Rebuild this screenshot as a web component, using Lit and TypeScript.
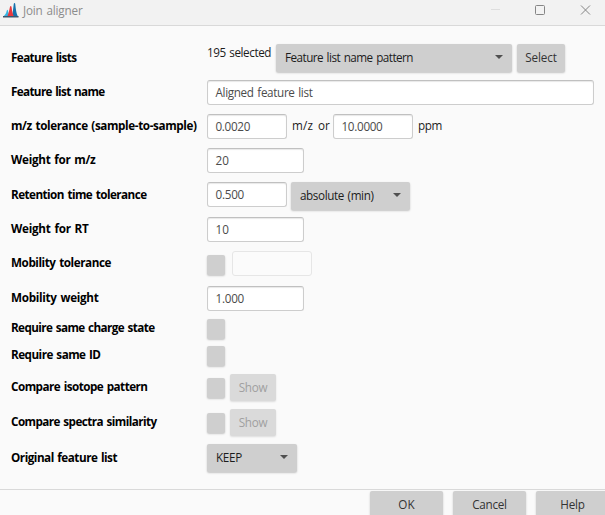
import { LitElement, html, css, svg, nothing, TemplateResult } from "lit";
import { customElement, property } from "lit/decorators.js";

/** Single-line text tracked so that it fills a given advance width. */
@customElement("fit-text")
class FitText extends LitElement {
  @property({ type: Number }) w = 0;
  @property() text = "";
  static styles = css`
    :host { display: block; white-space: pre; flex: none; position: relative; top: -1px; }
    span { display: inline-block; white-space: pre; word-spacing: 1px; }
  `;
  render() {
    return html`<span>${this.text}</span>`;
  }
  updated() {
    const s = this.renderRoot.querySelector("span") as HTMLElement;
    s.style.letterSpacing = "0px";
    const natural = s.getBoundingClientRect().width;
    s.style.letterSpacing = (this.w - natural) / this.text.length + "px";
  }
}

const t = (text: string, w: number) => html`<fit-text .text=${text} .w=${w}></fit-text>`;
const input = (text: string, w: number, size: string) =>
  html`<div class="input ${size}">${text ? t(text, w) : nothing}</div>`;
const combo = (text: string, w: number, size: string) => html`
  <div class="combo ${size}">${t(text, w)}<i class="arrow"></i></div>`;
const check = html`<div class="check"></div>`;

interface Row { label: string; w: number; size: string; body: TemplateResult; }

const rows: Row[] = [
  { label: "Feature lists", w: 65.5, size: "tall",
    body: html`<div class="count">${t("195 selected", 64)}</div>
      ${combo("Feature list name pattern", 128, "wide")}
      <div class="btn select">${t("Select", 31.5)}</div>` },
  { label: "Feature list name", w: 93.5, size: "mid", body: input("Aligned feature list", 97, "full") },
  { label: "m/z tolerance (sample-to-sample)", w: 185.5, size: "mid",
    body: html`${input("0.0020", 34.5, "small")}<div class="unit mz">${t("m/z", 21)}</div>
      <div class="unit or">${t("or", 12)}</div>${input("10.0000", 41, "small")}
      <div class="unit ppm">${t("ppm", 24)}</div>` },
  { label: "Weight for m/z", w: 84.5, size: "mid", body: input("20", 13.5, "medium") },
  { label: "Retention time tolerance", w: 135.5, size: "time",
    body: html`${input("0.500", 28.5, "small")}${combo("absolute (min)", 73.5, "unitbox")}` },
  { label: "Weight for RT", w: 77.5, size: "mid", body: input("10", 13.5, "medium") },
  { label: "Mobility tolerance", w: 100, size: "mid", body: html`${check}${input("", 0, "small off")}` },
  { label: "Mobility weight", w: 87.5, size: "mid", body: input("1.000", 28.5, "medium") },
  { label: "Require same charge state", w: 143.5, size: "low", body: check },
  { label: "Require same ID", w: 89.5, size: "low", body: check },
  { label: "Compare isotope pattern", w: 136.5, size: "mid show",
    body: html`${check}<div class="btn dim">${t("Show", 28.5)}</div>` },
  { label: "Compare spectra similarity", w: 145.5, size: "mid show",
    body: html`${check}<div class="btn dim">${t("Show", 28.5)}</div>` },
  { label: "Original feature list", w: 106, size: "tall", body: combo("KEEP", 26, "keep") },
];

@customElement("app-root")
class AppRoot extends LitElement {
  static styles = css`
    * { box-sizing: border-box; }
    :host {
      display: flex; flex-direction: column; width: 605px; height: 515px; overflow: hidden;
      background: #fafafa; color: #1c1c1c;
      font: 11.7px/16px "Open Sans", "Noto Sans", sans-serif;
    }
    .title {
      flex: none; height: 26px; display: flex; align-items: flex-start; padding-left: 3px;
      background: #f2f2f2; border-bottom: 1px solid #d9d9d9; color: #8c8c8c;
    }
    .logo { width: 16px; height: 16px; margin-top: 2px; }
    .name { margin: 3px 0 0 4px; }
    .win { margin-left: auto; width: 115px; height: 20px; }
    .form {
      flex: none; height: 463px; padding: 18px 11px 0; display: grid; align-content: start;
      grid-template-columns: 196px 1fr;
      grid-template-rows: 36px 34px 34px 34px 35px 34px 35px 33px 27px 28px 35px 35px 28px;
    }
    .label, .body { display: flex; align-items: center; height: 24px; }
    .label { font-weight: 700; color: #000; white-space: nowrap; }
    .body { align-items: flex-start; }
    .tall { height: 28px; }
    .time { height: 26px; }
    .low { height: 18px; }
    .show { height: 26px; }
    .input {
      height: 25px; display: flex; align-items: center; padding: 0 0 0 7.5px; flex: none;
      background: #fff; border: 1px solid #cdcdcd; border-top-color: #c0c0c0; border-radius: 3px;
      box-shadow: inset 0 1px 1px #e8e8e8; color: #4b4b4b;
    }
    .full { width: 387px; }
    .small { width: 80px; }
    .medium { width: 97px; }
    .off { background: #fbfbfb; border-color: #e6e6e6; box-shadow: none; margin-left: 7px; }
    .combo, .btn, .check {
      background: #cfcfcf; border-radius: 2px; box-shadow: 0 1px 2px rgba(0,0,0,.22); flex: none;
    }
    .combo { display: flex; align-items: center; justify-content: space-between; height: 28px; padding: 0 9px; }
    .arrow { border: 4px solid transparent; border-top-color: #505050; border-bottom: 0; position: relative; top: -1px; }
    .wide { width: 236px; margin-left: 5px; }
    .unitbox { width: 119px; margin-left: 4px; }
    .keep { width: 90px; }
    .count { width: 64px; margin-top: 1px; }
    .btn { display: flex; align-items: center; justify-content: center; height: 28px; color: #333; }
    .select { width: 48px; margin-left: 5px; }
    .dim { width: 46px; height: 27px; margin-left: 5px; background: #dadada; color: #a0a0a0; box-shadow: 0 1px 2px rgba(0,0,0,.12); }
    .check { width: 18px; height: 20px; }
    .mid > .check { margin-top: 4px; }
    .unit { margin-top: 4px; }
    .mz { margin-left: 5px; }
    .or { margin: 4px 3px 0 5px; }
    .ppm { margin-left: 5px; }
    .foot {
      flex: none; height: 28px; overflow: hidden; border-top: 1px solid #d9d9d9; padding-left: 370px; display: flex; gap: 10px;
      padding-top: 1px; width: 640px;
    }
    .foot .btn { width: 73px; height: 27px; }
  `;

  render() {
    return html`
      <div class="title">
        <svg class="logo" viewBox="0 0 16 16">
          ${svg`
          <path d="M0 14.5C2 13.5 3 12 3.8 8.6c.2-1 .9-1 1.100 0L6.500 14.500z" fill="#35b4e2"/>
          <path d="M8.500 15C10 11 10.300 5 10.800 1.800c.2-1.200 1.200-1.200 1.400 0C12.900 7 13.200 12.500 15.500 15z" fill="#1672ad"/>
          <path d="M4 15C5.600 12 6.300 8 7 4.800c.3-1.200 1.200-1.200 1.500 0C9.100 8.500 9.300 12.500 11.300 15z" fill="#e8383d"/>
          <path d="M0 14h15.500v1.500H0z" fill="#3d5870"/>`}
        </svg>
        <div class="name">${t("Join aligner", 59.5)}</div>
        <svg class="win" viewBox="490 0 115 20" fill="none">
          <path d="M491 9.500h9" stroke="#dedede"/>
          <rect x="535.500" y="5.500" width="9" height="9" rx="1" stroke="#858585"/>
          <path d="M581 5.500l9 9M590 5.500l-9 9" stroke="#858585"/>
        </svg>
      </div>
      <div class="form">
        ${rows.map((r) => html`
          <div class="label ${r.size}">${t(r.label, r.w)}</div>
          <div class="body ${r.size}">${r.body}</div>`)}
      </div>
      <div class="foot">
        <div class="btn">${t("OK", 16.5)}</div>
        <div class="btn">${t("Cancel", 34.5)}</div>
        <div class="btn">${t("Help", 24.5)}</div>
      </div>`;
  }
}
